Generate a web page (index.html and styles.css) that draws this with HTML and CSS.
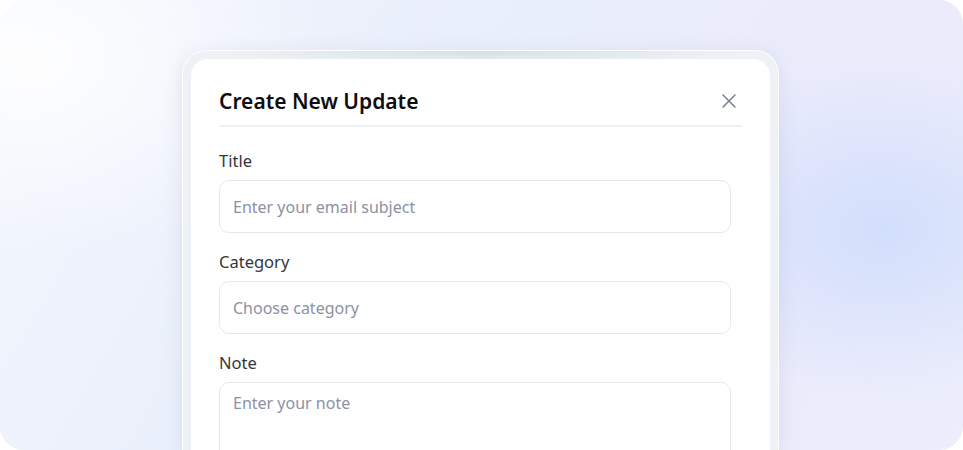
FILE: index.html
```html
<!DOCTYPE html>
<html lang="en">
<head>
    <meta charset="UTF-8">
    <meta name="viewport" content="width=device-width, initial-scale=1.0">
    <title>Create New Update</title>
    <link rel="stylesheet" href="styles.css">
</head>
<body>
    <div class="frame">
        <div class="shell">
            <div class="card">
                <!-- Kopfzeile -->
                <div class="card-header">
                    <h2>Create New Update</h2>
                    <button class="close" aria-label="Close">
                        <svg width="16" height="16" viewBox="0 0 16 16" fill="none" stroke="#7c8396" stroke-width="1.6" stroke-linecap="round">
                            <path d="M2 2L14 14M14 2L2 14"/>
                        </svg>
                    </button>
                </div>

                <div class="form-group">
                    <label for="title">Title</label>
                    <input type="text" id="title" placeholder="Enter your email subject">
                </div>
                <div class="form-group">
                    <label for="category">Category</label>
                    <input type="text" id="category" placeholder="Choose category">
                </div>
                <div class="form-group">
                    <label for="note">Note</label>
                    <textarea id="note" rows="4" placeholder="Enter your note"></textarea>
                </div>
            </div>
        </div>
    </div>
</body>
</html>
```

FILE: styles.css
```css
body {
    margin: 0;
    background: #fff;
    font-family: "Noto Sans", Arial, sans-serif;
    color: #2f323a;
}
.frame {
    height: 450px;
    border-radius: 24px;
    overflow: hidden;
    padding-left: 182px;
    box-sizing: border-box;
    display: flex;
    background:
        radial-gradient(ellipse 230px 170px at 885px 230px, rgba(205, 220, 252, 0.85), transparent),
        radial-gradient(ellipse 300px 200px at 30px 60px, rgba(255, 255, 255, 0.9), transparent),
        linear-gradient(120deg, #f3f6fd 0%, #e9effb 40%, #ebebfb 75%, #eceefc 100%);
}
.shell {
    width: 579px;
    margin-top: 50px;
    padding: 8px 8px 0;
    border: 1px solid rgba(255, 255, 255, 0.9);
    border-bottom: none;
    border-radius: 24px 24px 0 0;
    background:
        radial-gradient(ellipse 260px 14px at 50% 0, #d2e1e7, transparent),
        #eef1f5;
    box-shadow: 0 4px 18px rgba(150, 165, 200, 0.25);
}
.card {
    background: #fff;
    border-radius: 17px 17px 0 0;
    padding: 27px 28px 0;
    height: 400px;
    box-sizing: border-box;
}
.card-header {
    display: flex;
    align-items: center;
    justify-content: space-between;
    padding-bottom: 9px;
    border-bottom: 2px solid #eef0f2;
    margin-bottom: 22px;
}
.card-header h2 {
    margin: 0;
    font-size: 21px;
    font-weight: 600;
    line-height: 30px;
    color: #0d0e12;
}
.close {
    background: none;
    border: none;
    padding: 0;
    margin-right: 5px;
    display: flex;
    cursor: pointer;
}
.form-group {
    margin-bottom: 17px;
}
label {
    display: block;
    font-size: 16.5px;
    line-height: 24px;
    margin-bottom: 7px;
    color: #34363d;
}
input[type="text"], textarea {
    display: block;
    width: 512px;
    box-sizing: border-box;
    padding: 0 13px;
    height: 53px;
    border: 1px solid #e6e8ec;
    border-radius: 10px;
    font-family: inherit;
    font-size: 16px;
    color: #2f323a;
    background: #fff;
}
textarea {
    height: 110px;
    padding-top: 9px;
    resize: none;
}
::placeholder {
    color: #8c91a4;
}
```
